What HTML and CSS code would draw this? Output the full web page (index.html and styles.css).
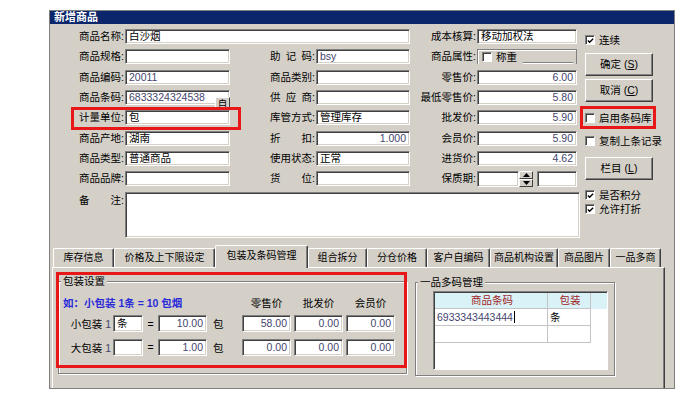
FILE: index.html
```html
<!DOCTYPE html>
<html lang="zh-CN">
<head>
    <meta charset="UTF-8">
    <meta name="viewport" content="width=device-width, initial-scale=1.0">
    <title>新增商品</title>
    <link rel="stylesheet" href="styles.css">
</head>
<body>

<div class="window">
    <div class="titlebar">新增商品</div>

    <div class="top">
        <div class="fields">
            <!-- row 1 -->
            <label class="lbl">商品名称:</label>
            <div class="box wide">白沙烟</div>
            <label class="lbl">成本核算:</label>
            <div class="box">移动加权法</div>

            <!-- row 2 -->
            <label class="lbl">商品规格:</label>
            <div class="box"></div>
            <label class="lbl">助&ensp;记&ensp;码:</label>
            <div class="box num">bsy</div>
            <label class="lbl">商品属性:</label>
            <div class="attr"><span class="chk"></span>称重</div>

            <!-- row 3 -->
            <label class="lbl">商品编码:</label>
            <div class="box num">20011</div>
            <label class="lbl">商品类别:</label>
            <div class="box"></div>
            <label class="lbl">零售价:</label>
            <div class="box num right">6.00</div>

            <!-- row 4 -->
            <label class="lbl">商品条码:</label>
            <div class="box num code">6833324324538<span class="auto">自</span></div>
            <label class="lbl">供&ensp;应&ensp;商:</label>
            <div class="box"></div>
            <label class="lbl">最低零售价:</label>
            <div class="box num right">5.80</div>

            <!-- row 5 -->
            <label class="lbl">计量单位:</label>
            <div class="box">包</div>
            <label class="lbl">库管方式:</label>
            <div class="box">管理库存</div>
            <label class="lbl">批发价:</label>
            <div class="box num right">5.90</div>

            <!-- row 6 -->
            <label class="lbl">商品产地:</label>
            <div class="box">湖南</div>
            <label class="lbl">折&emsp;&emsp;扣:</label>
            <div class="box num right">1.000</div>
            <label class="lbl">会员价:</label>
            <div class="box num right">5.90</div>

            <!-- row 7 -->
            <label class="lbl">商品类型:</label>
            <div class="box">普通商品</div>
            <label class="lbl">使用状态:</label>
            <div class="box">正常</div>
            <label class="lbl">进货价:</label>
            <div class="box num right">4.62</div>

            <!-- row 8 -->
            <label class="lbl">商品品牌:</label>
            <div class="box"></div>
            <label class="lbl">货&emsp;&emsp;位:</label>
            <div class="box"></div>
            <label class="lbl">保质期:</label>
            <div class="shelf">
                <div class="box days"></div>
                <div class="spin">
                    <span class="spin-btn"><svg width="7" height="4" viewBox="0 0 7 4"><path d="M0 4 L3.5 0 L7 4 Z" fill="#000"/></svg></span>
                    <span class="spin-btn"><svg width="7" height="4" viewBox="0 0 7 4"><path d="M0 0 L3.5 4 L7 0 Z" fill="#000"/></svg></span>
                </div>
                <div class="box unit"></div>
            </div>

            <!-- row 9 -->
            <label class="lbl note-lbl">备&emsp;&emsp;注:</label>
            <div class="box note"></div>
        </div>

        <div class="side">
            <div class="check mt6"><span class="chk on"><svg width="8" height="8" viewBox="0 0 8 8"><path d="M1 3.5 L3 5.5 L7 1.5" fill="none" stroke="#000" stroke-width="1.6"/></svg></span>连续</div>
            <div class="btn mt8">确定&nbsp;(<u>S</u>)</div>
            <div class="btn mt3">取消&nbsp;(<u>C</u>)</div>
            <div class="check mt11"><span class="chk"></span>启用条码库</div>
            <div class="check mt13"><span class="chk"></span>复制上条记录</div>
            <div class="btn mt11">栏目&nbsp;(<u>L</u>)</div>
            <div class="check mt10"><span class="chk on"><svg width="8" height="8" viewBox="0 0 8 8"><path d="M1 3.5 L3 5.5 L7 1.5" fill="none" stroke="#000" stroke-width="1.6"/></svg></span>是否积分</div>
            <div class="check mt4"><span class="chk on"><svg width="8" height="8" viewBox="0 0 8 8"><path d="M1 3.5 L3 5.5 L7 1.5" fill="none" stroke="#000" stroke-width="1.6"/></svg></span>允许打折</div>
        </div>
    </div>

    <div class="tabs">
        <div class="tab t1">库存信息</div>
        <div class="tab t2">价格及上下限设定</div>
        <div class="tab t3 active">包装及条码管理</div>
        <div class="tab t4">组合拆分</div>
        <div class="tab t5">分仓价格</div>
        <div class="tab t6">客户自编码</div>
        <div class="tab t7">商品机构设置</div>
        <div class="tab t8">商品图片</div>
        <div class="tab t9">一品多商</div>
    </div>

    <div class="panel">
        <div class="group pack">
            <span class="legend">包装设置</span>
            <div class="pack-grid">
                <div class="example">如：小包装 1条 = 10 包烟</div>
                <div class="prices heads">
                    <span>零售价</span><span>批发价</span><span>会员价</span>
                </div>

                <div class="plbl">小包装 <span class="num">1</span></div>
                <div class="box small">条</div>
                <div class="eq">=</div>
                <div class="box small num right">10.00</div>
                <div class="pack-unit">包</div>
                <div class="prices">
                    <div class="box small num right">58.00</div>
                    <div class="box small num right">0.00</div>
                    <div class="box small num right">0.00</div>
                </div>

                <div class="plbl">大包装 <span class="num">1</span></div>
                <div class="box small"></div>
                <div class="eq">=</div>
                <div class="box small num right">1.00</div>
                <div class="pack-unit">包</div>
                <div class="prices">
                    <div class="box small num right">0.00</div>
                    <div class="box small num right">0.00</div>
                    <div class="box small num right">0.00</div>
                </div>
            </div>
        </div>

        <div class="group codes">
            <span class="legend">一品多码管理</span>
            <div class="grid">
                <div class="grow head"><span class="c1">商品条码</span><span class="c2">包装</span></div>
                <div class="grow"><span class="c1 num">6933343443444<i class="caret"></i></span><span class="c2">条</span></div>
                <div class="grow"><span class="c1"></span><span class="c2"></span></div>
            </div>
        </div>
    </div>
</div>

<!-- red highlight frames drawn over the dialog -->
<div class="mark mark-unit"></div>
<div class="mark mark-lib"></div>
<div class="mark mark-pack"></div>

</body>
</html>
```

FILE: styles.css
```css
body {
    margin: 0;
    background: #fff;
    color: #000;
    font-family: "Liberation Sans", "Noto Sans CJK SC", sans-serif;
    font-size: 10.5px;
}

.window {
    margin: 10px 0 0 49px;
    width: 624px;
    height: 377px;
    border: 1px solid #808080;
    background: #d4d0c8;
    overflow: hidden;
}

.titlebar {
    height: 13px;
    line-height: 13px;
    padding-left: 4px;
    background: #0c266c;
    color: #fff;
    font-size: 11px;
    font-weight: bold;
}

/* upper form */
.top {
    display: flex;
    align-items: flex-start;
    padding: 5px 0 0 2px;
}

.fields {
    display: grid;
    grid-template-columns: 73px 105px 86px 94px 67px 100px;
    grid-template-rows: repeat(8, 15px) 46px;
    row-gap: 5.33px;
}

.lbl {
    text-align: right;
    padding-right: 1px;
    line-height: 15px;
    white-space: nowrap;
}

.note-lbl {
    line-height: 13px;
    padding-top: 2px;
}

.box {
    box-sizing: border-box;
    height: 15px;
    padding: 0 3px;
    line-height: 13px;
    background: #fff;
    border: 1px solid;
    border-color: #808080 #fff #fff #808080;
    box-shadow: inset 1px 1px 0 #404040, inset -1px -1px 0 #d4d0c8;
    white-space: nowrap;
}

.num {
    color: #45456e;
}

.right {
    text-align: right;
}

.wide {
    grid-column: span 3;
}

.code {
    position: relative;
}

.auto {
    position: absolute;
    right: -1px;
    top: 6px;
    width: 15px;
    height: 13px;
    box-sizing: border-box;
    background: #d4d0c8;
    border: 1px solid;
    border-color: #fff #404040 #404040 #fff;
    color: #000;
    font-size: 9.5px;
    line-height: 11px;
    text-align: center;
}

.attr {
    position: relative;
    display: flex;
    align-items: center;
    gap: 4px;
    padding-left: 4px;
    border: 1px solid #808080;
    border-bottom: none;
    box-shadow: inset 1px 1px 0 #fff;
    line-height: 13px;
}

.attr::after {
    content: "";
    position: absolute;
    left: 45px;
    right: 3px;
    bottom: 0;
    border-top: 1px solid #808080;
    border-bottom: 1px solid #fff;
}

.shelf {
    display: flex;
    align-items: flex-start;
}

.days {
    width: 42px;
    height: 16px;
}

.unit {
    width: 40px;
    height: 16px;
    margin-left: 4px;
}

.spin {
    display: flex;
    flex-direction: column;
    width: 14px;
    height: 16px;
}

.spin-btn {
    flex: 1;
    display: flex;
    align-items: center;
    justify-content: center;
    background: #d4d0c8;
    border: 1px solid;
    border-color: #fff #404040 #404040 #fff;
}

.note {
    grid-column: 2 / 7;
    height: 46px;
    margin-right: -3px;
}

/* right side column */
.side {
    display: flex;
    flex-direction: column;
    margin-left: 8px;
    width: 76px;
}

.check {
    display: flex;
    align-items: center;
    gap: 4px;
    height: 10px;
    line-height: 10px;
    white-space: nowrap;
}

.chk {
    box-sizing: border-box;
    width: 10px;
    height: 10px;
    flex: none;
    display: flex;
    align-items: center;
    justify-content: center;
    background: #fff;
    border: 1px solid;
    border-color: #808080 #fff #fff #808080;
    box-shadow: inset 1px 1px 0 #404040;
}

.chk svg {
    margin: 1px 0 0 1px;
}

.btn {
    box-sizing: border-box;
    width: 68px;
    height: 23px;
    line-height: 21px;
    text-align: center;
    background: #d4d0c8;
    border: 1px solid;
    border-color: #fff #404040 #404040 #fff;
    box-shadow: inset -1px -1px 0 #808080;
}

.btn u {
    text-decoration: underline;
}

.mt3 { margin-top: 3px; }
.mt4 { margin-top: 4px; }
.mt6 { margin-top: 6px; }
.mt8 { margin-top: 8px; }
.mt10 { margin-top: 10px; }
.mt11 { margin-top: 11px; }
.mt13 { margin-top: 13px; }

/* tabs */
.tabs {
    display: flex;
    align-items: flex-end;
    height: 22px;
    margin-top: 7px;
    padding-left: 3px;
    position: relative;
    z-index: 1;
}

.tab {
    flex: none;
    box-sizing: border-box;
    height: 19px;
    line-height: 17px;
    text-align: center;
    font-size: 10px;
    white-space: nowrap;
    border-top: 1px solid #fff;
    border-left: 1px solid #fff;
    border-right: 1px solid #404040;
    box-shadow: inset -1px 0 0 #808080;
    border-radius: 2px 2px 0 0;
}

.tab.active {
    height: 23px;
    margin-bottom: -1px;
    line-height: 20px;
    background: #d4d0c8;
}

.t1 { width: 61px; }
.t2 { width: 101px; }
.t3 { width: 93px; }
.t4 { width: 59px; }
.t5 { width: 60px; }
.t6 { width: 63px; }
.t7 { width: 68px; }
.t8 { width: 52px; }
.t9 { width: 51px; }

.panel {
    display: flex;
    align-items: flex-start;
    width: 613px;
    height: 122px;
    margin-left: 2px;
    box-sizing: border-box;
    border-top: 1px solid #fff;
    border-left: 1px solid #fff;
    border-right: 1px solid #404040;
    box-shadow: inset -1px 0 0 #808080;
}

.group {
    position: relative;
    box-sizing: border-box;
    border: 1px solid #808080;
    box-shadow: inset 1px 1px 0 #fff, 1px 1px 0 #fff;
}

.legend {
    position: absolute;
    top: -7px;
    left: 2px;
    padding: 0 2px;
    line-height: 12px;
    background: #d4d0c8;
    white-space: nowrap;
}

.pack {
    width: 349px;
    height: 93px;
    margin: 13px 0 0 5px;
    padding: 15px 0 0 4px;
}

.pack-grid {
    display: grid;
    grid-template-columns: 50px 30px 15px 49px 35px 155px;
    grid-template-rows: 12px 17px 17px;
    row-gap: 6.5px;
    align-items: center;
}

.example {
    grid-column: 1 / 6;
    color: #2a2ad8;
    font-weight: bold;
    white-space: nowrap;
    line-height: 12px;
}

.prices {
    display: flex;
    gap: 3px;
}

.heads span {
    width: 49px;
    text-align: center;
    line-height: 12px;
}

.prices .box {
    width: 49px;
}

.box.small {
    height: 17px;
    line-height: 15px;
}

.plbl {
    text-align: right;
    padding-right: 2px;
    white-space: nowrap;
}

.eq {
    text-align: center;
}

.pack-unit {
    padding-left: 6px;
}

.codes {
    width: 200px;
    height: 94px;
    margin: 14px 0 0 8px;
    padding: 8px 0 0 17px;
}

.grid {
    box-sizing: border-box;
    width: 175px;
    height: 79px;
    background: #fff;
    border: 1px solid;
    border-color: #808080 #fff #fff #808080;
    box-shadow: inset 1px 1px 0 #404040;
}

.grow {
    display: flex;
    height: 17px;
}

.grow.head {
    height: 16px;
    margin: 1px 0 0 1px;
    background: #d8f2f8;
    color: #a01c1c;
}

.grow.head span {
    text-align: center;
    line-height: 15px;
}

.c1,
.c2 {
    box-sizing: border-box;
    height: 100%;
    padding-left: 2px;
    line-height: 16px;
    border-right: 1px solid #c4c4c4;
    border-bottom: 1px solid #c4c4c4;
    white-space: nowrap;
}

.c1 {
    width: 113px;
}

.c2 {
    width: 43px;
}

.grow:not(.head) .c1 {
    margin-left: 1px;
}

.caret {
    display: inline-block;
    width: 1px;
    height: 12px;
    margin-left: 1px;
    vertical-align: -2px;
    background: #000;
}

/* red highlight frames */
.mark {
    position: absolute;
    box-sizing: border-box;
    border: 3px solid #e81818;
}

.mark-unit {
    left: 71px;
    top: 107px;
    width: 170px;
    height: 23px;
}

.mark-lib {
    left: 580px;
    top: 106px;
    width: 76px;
    height: 23px;
}

.mark-pack {
    left: 56px;
    top: 272px;
    width: 351px;
    height: 96px;
}
```
